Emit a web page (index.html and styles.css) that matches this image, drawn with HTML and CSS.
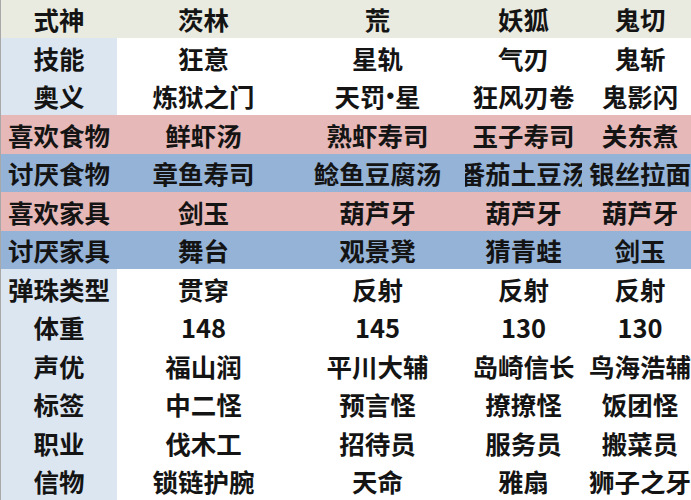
FILE: index.html
```html
<!DOCTYPE html>
<html lang="zh-CN">
<head>
<meta charset="utf-8">
<title>式神</title>
<link rel="stylesheet" href="styles.css">
</head>
<body>
<div class="sheet">
  <div class="row head"><div class="cell">式神</div><div class="cell">茨林</div><div class="cell">荒</div><div class="cell">妖狐</div><div class="cell">鬼切</div></div>
  <div class="row plain"><div class="cell">技能</div><div class="cell">狂意</div><div class="cell">星轨</div><div class="cell">气刃</div><div class="cell">鬼斩</div></div>
  <div class="row plain"><div class="cell">奥义</div><div class="cell">炼狱之门</div><div class="cell">天罚<span class="dot">•</span>星</div><div class="cell">狂风刃卷</div><div class="cell">鬼影闪</div></div>
  <div class="row pink"><div class="cell">喜欢食物</div><div class="cell">鲜虾汤</div><div class="cell">熟虾寿司</div><div class="cell">玉子寿司</div><div class="cell">关东煮</div></div>
  <div class="row blue"><div class="cell">讨厌食物</div><div class="cell">章鱼寿司</div><div class="cell">鲶鱼豆腐汤</div><div class="cell">番茄土豆汤</div><div class="cell">银丝拉面</div></div>
  <div class="row pink"><div class="cell">喜欢家具</div><div class="cell">剑玉</div><div class="cell">葫芦牙</div><div class="cell">葫芦牙</div><div class="cell">葫芦牙</div></div>
  <div class="row blue"><div class="cell">讨厌家具</div><div class="cell">舞台</div><div class="cell">观景凳</div><div class="cell">猜青蛙</div><div class="cell">剑玉</div></div>
  <div class="row plain"><div class="cell">弹珠类型</div><div class="cell">贯穿</div><div class="cell">反射</div><div class="cell">反射</div><div class="cell">反射</div></div>
  <div class="row plain"><div class="cell">体重</div><div class="cell">148</div><div class="cell">145</div><div class="cell">130</div><div class="cell">130</div></div>
  <div class="row plain"><div class="cell">声优</div><div class="cell">福山润</div><div class="cell">平川大辅</div><div class="cell">岛崎信长</div><div class="cell">鸟海浩辅</div></div>
  <div class="row plain"><div class="cell">标签</div><div class="cell">中二怪</div><div class="cell">预言怪</div><div class="cell">撩撩怪</div><div class="cell">饭团怪</div></div>
  <div class="row plain"><div class="cell">职业</div><div class="cell">伐木工</div><div class="cell">招待员</div><div class="cell">服务员</div><div class="cell">搬菜员</div></div>
  <div class="row plain"><div class="cell">信物</div><div class="cell">锁链护腕</div><div class="cell">天命</div><div class="cell">雅扇</div><div class="cell">狮子之牙</div></div>
</div>
</body>
</html>
```

FILE: styles.css
```css
html, body {
  margin: 0;
  padding: 0;
  background: #ffffff;
  overflow: hidden;
}

.sheet {
  width: 698px;
  height: 500px;
  display: grid;
  grid-template-rows: repeat(13, 1fr);
  border-left: 1px solid #a8a8a8;
  font-family: "Noto Sans CJK SC", "Microsoft YaHei", sans-serif;
  font-weight: 700;
  font-size: 25.5px;
  color: #141414;
}

.row {
  display: grid;
  grid-template-columns: 116px 173px 175px 117px 116px;
}

.cell {
  display: flex;
  align-items: center;
  justify-content: center;
  white-space: nowrap;
  overflow: hidden;
  line-height: 1;
}

.dot {
  font-family: "Liberation Sans", Arial, sans-serif;
  font-size: 22px;
  padding: 0 1px;
}

.head {
  background: #eaebe0;
}

.plain {
  background: #ffffff;
}

.plain .cell:first-child {
  background: #dce6f1;
}

.pink {
  background: #e6b8b7;
}

.blue {
  background: #95b3d7;
}
```
